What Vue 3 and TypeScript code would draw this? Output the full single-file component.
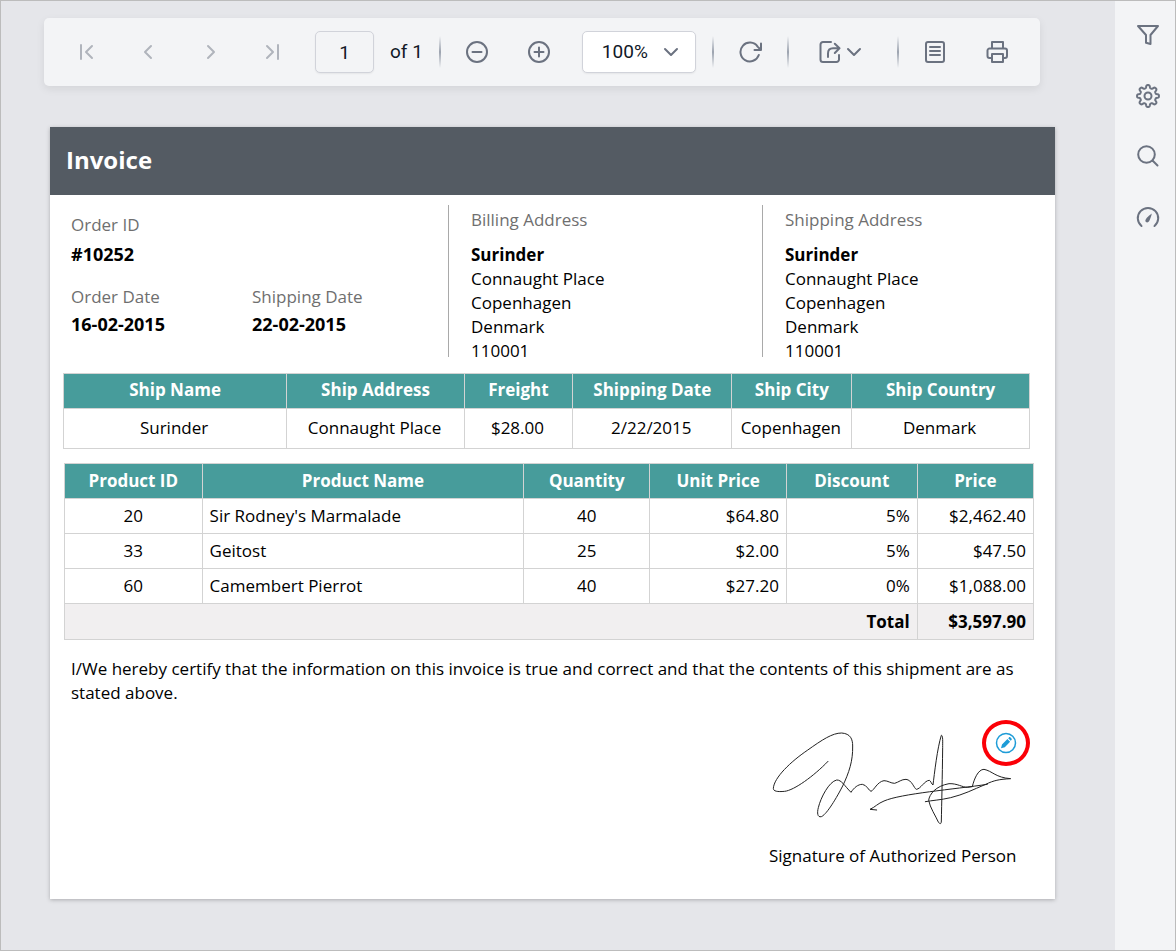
<script setup lang="ts">
import { ref } from 'vue'

interface ShipRow {
  name: string
  address: string
  freight: string
  date: string
  city: string
  country: string
}

interface Product {
  id: number
  name: string
  quantity: number
  unitPrice: string
  discount: string
  price: string
}

const pageNumber = ref('1')
const zoom = ref('100%')
const zoomLevels = ['50%', '75%', '100%', '125%', '150%']

const address = ['Connaught Place', 'Copenhagen', 'Denmark', '110001']
const addresses = [
  { title: 'Billing Address', name: 'Surinder', lines: address },
  { title: 'Shipping Address', name: 'Surinder', lines: address },
]

const shipRows: ShipRow[] = [
  { name: 'Surinder', address: 'Connaught Place', freight: '$28.00', date: '2/22/2015', city: 'Copenhagen', country: 'Denmark' },
]

const products: Product[] = [
  { id: 20, name: "Sir Rodney's Marmalade", quantity: 40, unitPrice: '$64.80', discount: '5%', price: '$2,462.40' },
  { id: 33, name: 'Geitost', quantity: 25, unitPrice: '$2.00', discount: '5%', price: '$47.50' },
  { id: 60, name: 'Camembert Pierrot', quantity: 40, unitPrice: '$27.20', discount: '0%', price: '$1,088.00' },
]

// Outline of an eight-toothed gear centred in a 24-unit box
function gearOutline(): string {
  const points: string[] = []
  for (let i = 0; i < 160; i++) {
    const a = (i / 160) * Math.PI * 2
    const r = 9.5 + 1.5 * Math.tanh(2 * Math.cos(8 * a))
    points.push(`${(12 + r * Math.sin(a)).toFixed(2)} ${(12 - r * Math.cos(a)).toFixed(2)}`)
  }
  return `M${points.join('L')}Z`
}
const gear = gearOutline()
</script>

<template>
  <div class="viewer">
    <main class="stage">
      <div class="toolbar" role="toolbar" aria-label="Report toolbar">
        <div class="group">
          <button class="tool" type="button" aria-label="First page" disabled>
            <svg viewBox="0 0 24 24"><path d="M7 5v14M18 6l-6 6 6 6" /></svg>
          </button>
          <button class="tool" type="button" aria-label="Previous page" disabled>
            <svg viewBox="0 0 24 24"><path d="M15 6l-6 6 6 6" /></svg>
          </button>
          <button class="tool" type="button" aria-label="Next page" disabled>
            <svg viewBox="0 0 24 24"><path d="M10 6l6 6-6 6" /></svg>
          </button>
          <button class="tool" type="button" aria-label="Last page" disabled>
            <svg viewBox="0 0 24 24"><path d="M7 6l6 6-6 6M18 5v14" /></svg>
          </button>
          <input v-model="pageNumber" class="page-input" type="text" aria-label="Page number" />
        </div>
        <span class="page-count">of 1</span>
        <span class="separator"></span>
        <div class="group">
          <button class="tool" type="button" aria-label="Zoom out">
            <svg viewBox="0 0 24 24"><circle cx="12" cy="12" r="10" /><path d="M7.500 12h9" /></svg>
          </button>
          <button class="tool" type="button" aria-label="Zoom in">
            <svg viewBox="0 0 24 24"><circle cx="12" cy="12" r="10" /><path d="M7.500 12h9M12 7.500v9" /></svg>
          </button>
          <div class="zoom">
            <select v-model="zoom" aria-label="Zoom level">
              <option v-for="level in zoomLevels" :key="level">{{ level }}</option>
            </select>
            <svg class="caret" viewBox="0 0 16 16"><path d="M2 5l6 6 6-6" /></svg>
          </div>
        </div>
        <span class="separator"></span>
        <button class="tool refresh" type="button" aria-label="Refresh">
          <svg viewBox="0 0 24 24"><path d="M19.800 15A9.400 9.400 0 1 1 18.600 6.600L21.500 9.500M22 3.500v6.500h-6.500" /></svg>
        </button>
        <span class="separator"></span>
        <button class="tool export" type="button" aria-label="Export">
          <svg viewBox="0 0 24 24">
            <path d="M13 2H5a2.500 2.500 0 0 0-2.500 2.500v15A2.500 2.500 0 0 0 5 22h13.500a2.500 2.500 0 0 0 2.500-2.500V15" />
            <path d="M10 17v-3.500C10 10 12 8.300 15 8.300h6.500M16.800 3.700l4.700 4.600-4.700 4.700" />
          </svg>
          <svg class="caret" viewBox="0 0 16 16"><path d="M2 5l6 6 6-6" /></svg>
        </button>
        <span class="separator"></span>
        <div class="group">
          <button class="tool" type="button" aria-label="Print layout">
            <svg viewBox="0 0 24 24"><rect x="3" y="2" width="18" height="20" rx="2" /><path d="M7 7h10M7 11h10M7 15h10" /></svg>
          </button>
          <button class="tool" type="button" aria-label="Print">
            <svg viewBox="0 0 24 24">
              <path d="M7 8.500V2h11v6.500M7 18H4.500A2 2 0 0 1 2.500 16v-5.500a2 2 0 0 1 2-2h15.500a2 2 0 0 1 2 2V16a2 2 0 0 1-2 2H18" />
              <rect x="7" y="14" width="11" height="8" />
            </svg>
          </button>
        </div>
      </div>

      <article class="sheet">
        <header class="title"><h1>Invoice</h1></header>

        <section class="details">
          <dl class="order">
            <div class="order-id">
              <dt>Order ID</dt>
              <dd>#10252</dd>
            </div>
            <div>
              <dt>Order Date</dt>
              <dd>16-02-2015</dd>
            </div>
            <div>
              <dt>Shipping Date</dt>
              <dd>22-02-2015</dd>
            </div>
          </dl>
          <template v-for="block in addresses" :key="block.title">
            <span class="divider"></span>
            <address>
              <h2>{{ block.title }}</h2>
              <strong>{{ block.name }}</strong>
              <span v-for="line in block.lines" :key="line">{{ line }}</span>
            </address>
          </template>
        </section>

        <table class="shipping">
          <colgroup>
            <col class="s-name" /><col class="s-address" /><col class="s-freight" />
            <col class="s-date" /><col class="s-city" /><col class="s-country" />
          </colgroup>
          <thead>
            <tr>
              <th>Ship Name</th>
              <th>Ship Address</th>
              <th>Freight</th>
              <th>Shipping Date</th>
              <th>Ship City</th>
              <th>Ship Country</th>
            </tr>
          </thead>
          <tbody>
            <tr v-for="row in shipRows" :key="row.name">
              <td>{{ row.name }}</td>
              <td>{{ row.address }}</td>
              <td>{{ row.freight }}</td>
              <td>{{ row.date }}</td>
              <td>{{ row.city }}</td>
              <td>{{ row.country }}</td>
            </tr>
          </tbody>
        </table>

        <table class="products">
          <colgroup>
            <col class="p-id" /><col class="p-name" /><col class="p-qty" />
            <col class="p-unit" /><col class="p-disc" /><col class="p-price" />
          </colgroup>
          <thead>
            <tr>
              <th>Product ID</th>
              <th>Product Name</th>
              <th>Quantity</th>
              <th>Unit Price</th>
              <th>Discount</th>
              <th>Price</th>
            </tr>
          </thead>
          <tbody>
            <tr v-for="p in products" :key="p.id">
              <td>{{ p.id }}</td>
              <td class="text">{{ p.name }}</td>
              <td>{{ p.quantity }}</td>
              <td class="num">{{ p.unitPrice }}</td>
              <td class="num">{{ p.discount }}</td>
              <td class="num">{{ p.price }}</td>
            </tr>
          </tbody>
          <tfoot>
            <tr>
              <td class="num" colspan="5">Total</td>
              <td class="num">$3,597.90</td>
            </tr>
          </tfoot>
        </table>

        <p class="certify">
          I/We hereby certify that the information on this invoice is true and correct and that the contents of this shipment are as stated above.
        </p>

        <figure class="signature">
          <svg class="ink" viewBox="45 18 786 336" role="img" aria-label="Signature">
            <path d="M222 151C180 195 120 238 92 241C70 243 58 241 58 232C60 200 110 152 160 118C205 86 235 66 263 66C290 68 296 85 296 105C297 150 285 185 266 225C240 275 215 312 202 317C190 320 189 305 193 290C200 260 225 212 248 207C262 206 272 225 291 244C300 230 312 220 325 220C338 221 345 240 351 241C360 238 370 212 390 209C402 209 410 217 422 217C435 213 442 205 456 205C474 207 480 232 487 235C500 234 512 208 526 208C530 209 533 220 537 222C541 190 550 110 562 73C567 72 566 90 566 110C565 200 563 280 562 330C562 342 556 338 553 333C545 315 528 290 524 268C526 250 545 225 585 218C610 217 625 229 640 229L655 227C660 205 672 175 690 175C715 180 725 200 770 203C735 205 720 208 695 220C655 237 630 250 590 260C560 267 535 268 514 272" />
            <path d="M700 220C600 235 440 248 390 270C372 277 362 289 348 295L368 297" />
          </svg>
          <button class="edit" type="button" aria-label="Edit signature">
            <svg viewBox="0 0 24 24">
              <circle cx="12" cy="12" r="9.500" />
              <path d="M7 17.200l1-3.800 5.400-5.400 2.700 2.700-5.300 5.500zM14.200 7.200l1-1c.7-.6 3.200 1.700 2.500 2.500l-1 1z" />
            </svg>
          </button>
          <figcaption>Signature of Authorized Person</figcaption>
        </figure>
      </article>
    </main>

    <nav class="sidebar" aria-label="Report panels">
      <button type="button" aria-label="Filter">
        <svg viewBox="0 0 24 24"><path d="M2 3h20l-7.500 9v9L10 19.800V12z" /></svg>
      </button>
      <button type="button" aria-label="Settings">
        <svg viewBox="0 0 24 24"><path :d="gear" /><circle cx="12" cy="12" r="3.500" /></svg>
      </button>
      <button type="button" aria-label="Search">
        <svg viewBox="0 0 24 24"><circle cx="10.500" cy="9.500" r="8.300" /><path d="M16.500 15.500l5 5" /></svg>
      </button>
      <button type="button" aria-label="Performance">
        <svg viewBox="0 0 24 24">
          <path d="M5.500 20a10.200 10.200 0 1 1 13 0" />
          <path class="needle" d="M15.800 7.500c-2.400 1.500-5.700 4.700-6.400 6.700-.5 2.200 2.500 3.100 3.700 1.100.9-1.800 2.200-4.800 2.700-7.800z" />
        </svg>
      </button>
    </nav>
  </div>
</template>

<style>
body {
  margin: 0;
}
</style>

<style scoped>
.viewer {
  box-sizing: border-box;
  min-height: 100vh;
  display: flex;
  border: 1px solid #bcbcbc;
  background: #e5e6ea;
  color: #000;
  font: 17px/24px "Open Sans", "Noto Sans", sans-serif;
}

.stage {
  flex: 1;
  min-width: 0;
  padding: 17px 60px 50px 43px;
}

svg {
  display: block;
  flex: none;
  width: 24px;
  height: 24px;
  fill: none;
  stroke: currentColor;
  stroke-width: 2;
  stroke-linecap: round;
  stroke-linejoin: round;
}

button {
  padding: 0;
  border: 0;
  background: none;
  color: #6b7280;
  cursor: pointer;
}

.toolbar {
  display: flex;
  align-items: center;
  box-sizing: border-box;
  height: 68px;
  margin-right: 15px;
  padding: 0 23px;
  border-radius: 5px;
  background: #f3f4f6;
  box-shadow: 0 3px 8px rgba(0, 0, 0, 0.08);
  color: #111827;
  font-family: Roboto, sans-serif;
  font-size: 19px;
}

.group {
  display: flex;
  align-items: center;
  gap: 24px;
}

.tool {
  display: flex;
  align-items: center;
  justify-content: center;
  width: 38px;
  height: 42px;
}

.tool:disabled {
  color: #b0b4bc;
  cursor: default;
}

.tool.refresh {
  width: 40px;
}

.tool.export {
  justify-content: flex-start;
  gap: 4px;
  width: 75px;
  padding-left: 12px;
}

.page-input {
  box-sizing: border-box;
  width: 59px;
  height: 42px;
  padding: 0;
  border: 1px solid #d1d3da;
  border-radius: 5px;
  background: #f3f4f6;
  box-shadow: 0 1px 2px rgba(0, 0, 0, 0.06);
  color: inherit;
  font: inherit;
  text-align: center;
}

.page-count {
  margin-left: 16px;
  white-space: nowrap;
}

.separator {
  width: 2px;
  height: 32px;
  margin: 0 17px 0 16px;
  background: linear-gradient(rgba(156, 163, 175, 0), #9ca3af, rgba(156, 163, 175, 0));
}

.zoom {
  display: grid;
  align-items: center;
  width: 114px;
}

.zoom > * {
  grid-area: 1 / 1;
}

.zoom select {
  appearance: none;
  box-sizing: border-box;
  width: 100%;
  height: 42px;
  padding: 0 19px;
  border: 1px solid #d1d3da;
  border-radius: 5px;
  background: #fff;
  box-shadow: 0 1px 2px rgba(0, 0, 0, 0.06);
  color: inherit;
  font: inherit;
}

.caret {
  width: 16px;
  height: 16px;
  color: #6b7280;
}

.zoom .caret {
  justify-self: end;
  margin-right: 17px;
  pointer-events: none;
}

.sheet {
  margin: 41px 0 0 6px;
  background: #fff;
  box-shadow: 0 1px 4px rgba(0, 0, 0, 0.25);
}

.title {
  padding: 17px 16px 19px;
  background: #545b63;
  color: #fff;
}

h1 {
  margin: 0;
  font-size: 24px;
  line-height: 32px;
}

.details {
  display: grid;
  grid-template-columns: 398fr 1px 313fr 1px 292fr;
  align-items: start;
  padding-top: 10px;
}

dl,
dd,
address,
h2,
figure {
  margin: 0;
}

.order {
  display: grid;
  grid-template-columns: 181px auto;
  row-gap: 19px;
  padding: 8px 0 0 21px;
}

.order-id {
  grid-column: 1 / -1;
  display: grid;
  row-gap: 2px;
}

dt,
h2 {
  color: #6f6f6f;
  font-weight: 400;
  font-size: 17px;
}

dd {
  margin-top: 3px;
  font-size: 18px;
  font-weight: 700;
}

.divider {
  height: 152px;
  background: #a9a9a9;
}

address {
  display: flex;
  flex-direction: column;
  padding: 3px 0 0 22px;
  font-style: normal;
}

h2 {
  margin-bottom: 11px;
}

table {
  border-collapse: collapse;
  table-layout: fixed;
}

th,
td {
  box-sizing: border-box;
  height: 35px;
  padding: 0;
  border: 1px solid #d3d3d3;
  text-align: center;
  white-space: nowrap;
}

th {
  background: #479c9b;
  color: #fff;
  font-weight: 700;
}

.shipping {
  width: calc(100% - 38px);
  margin: 10px 25px 0 13px;
}

.shipping th {
  padding-bottom: 2px;
}

.shipping td {
  height: 40px;
  padding: 0 2px 2px 0;
}

.s-name { width: 23.1%; }
.s-address { width: 18.4%; }
.s-freight { width: 11.2%; }
.s-date { width: 16.5%; }
.s-city { width: 12.4%; }
.s-country { width: 18.4%; }

.products {
  width: calc(100% - 35px);
  margin: 14px 21px 0 14px;
}

.p-id { width: 14.2%; }
.p-name { width: 33.2%; }
.p-qty { width: 13%; }
.p-unit { width: 14.1%; }
.p-disc { width: 13.5%; }
.p-price { width: 12%; }

.text {
  padding-left: 7px;
  text-align: left;
}

.num {
  padding-right: 7px;
  text-align: right;
}

tfoot td {
  height: 36px;
  background: #f1eff0;
  font-weight: 700;
}

.certify {
  margin: 17px 21px 0;
}

.signature {
  position: relative;
  width: 262px;
  margin: 12px 24px 0 auto;
  padding-bottom: 31px;
}

.ink {
  width: 262px;
  height: 112px;
  color: #222;
  stroke-width: 3;
}

.edit {
  position: absolute;
  top: 3px;
  right: 1px;
  display: flex;
  align-items: center;
  justify-content: center;
  width: 48px;
  height: 46px;
  border: 4px solid #fb0007;
  border-radius: 50%;
  color: #1e9cd7;
}

.edit svg {
  stroke-width: 1.5;
}

.edit path {
  fill: currentColor;
  stroke: none;
}

figcaption {
  margin-top: 15px;
  white-space: nowrap;
}

.sidebar {
  display: flex;
  flex-direction: column;
  align-items: center;
  gap: 24px;
  width: 60px;
  padding: 15px 0;
  box-sizing: border-box;
  background: #f3f4f6;
}

.sidebar button {
  display: flex;
  align-items: center;
  justify-content: center;
  width: 37px;
  height: 37px;
  margin-left: 6px;
  flex: none;
}

.sidebar .needle {
  fill: currentColor;
  stroke: none;
}
</style>
